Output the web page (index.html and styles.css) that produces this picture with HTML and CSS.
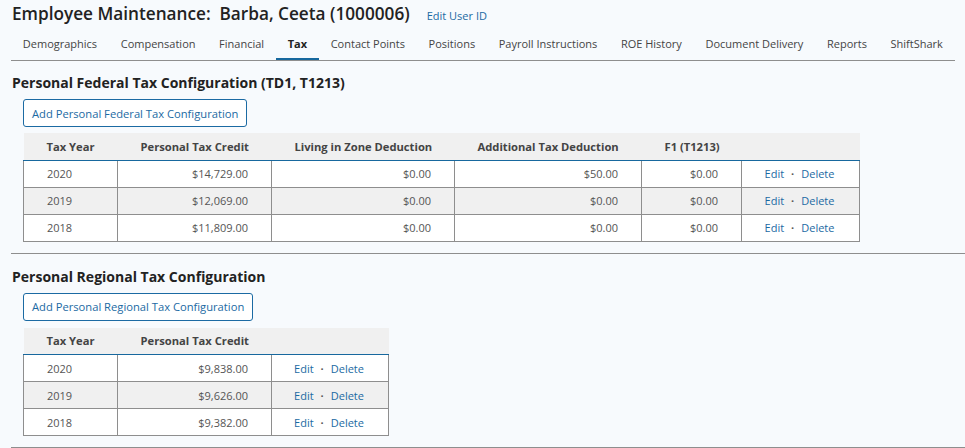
FILE: index.html
```html
<!DOCTYPE html>
<html>
<head>
<meta charset="utf-8">
<link rel="stylesheet" href="styles.css">
</head>
<body>
<div class="page">
  <header class="page-header">
    <h1 class="title">Employee Maintenance:&nbsp; Barba, Ceeta (1000006)</h1>
    <a class="link edit-id">Edit User ID</a>
  </header>
  <nav class="tabs">
    <a class="tab">Demographics</a>
    <a class="tab">Compensation</a>
    <a class="tab">Financial</a>
    <a class="tab active">Tax</a>
    <a class="tab">Contact Points</a>
    <a class="tab">Positions</a>
    <a class="tab">Payroll Instructions</a>
    <a class="tab">ROE History</a>
    <a class="tab">Document Delivery</a>
    <a class="tab">Reports</a>
    <a class="tab">ShiftShark</a>
  </nav>

  <section class="section">
    <h2 class="section-title">Personal Federal Tax Configuration (TD1, T1213)</h2>
    <button class="btn">Add Personal Federal Tax Configuration</button>
    <table class="grid federal">
      <colgroup>
        <col class="c-year"><col class="c-credit"><col class="c-zone"><col class="c-add"><col class="c-f1"><col class="c-act">
      </colgroup>
      <thead>
        <tr>
          <th class="left">Tax Year</th>
          <th>Personal Tax Credit</th>
          <th>Living in Zone Deduction</th>
          <th>Additional Tax Deduction</th>
          <th>F1 (T1213)</th>
          <th></th>
        </tr>
      </thead>
      <tbody>
        <tr><td class="left">2020</td><td>$14,729.00</td><td>$0.00</td><td>$50.00</td><td>$0.00</td><td class="actions"><a class="link">Edit</a><span class="dot">·</span><a class="link">Delete</a></td></tr>
        <tr class="alt"><td class="left">2019</td><td>$12,069.00</td><td>$0.00</td><td>$0.00</td><td>$0.00</td><td class="actions"><a class="link">Edit</a><span class="dot">·</span><a class="link">Delete</a></td></tr>
        <tr><td class="left">2018</td><td>$11,809.00</td><td>$0.00</td><td>$0.00</td><td>$0.00</td><td class="actions"><a class="link">Edit</a><span class="dot">·</span><a class="link">Delete</a></td></tr>
      </tbody>
    </table>
  </section>

  <section class="section">
    <h2 class="section-title">Personal Regional Tax Configuration</h2>
    <button class="btn">Add Personal Regional Tax Configuration</button>
    <table class="grid regional">
      <colgroup>
        <col class="c-year"><col class="c-rcredit"><col class="c-ract">
      </colgroup>
      <thead>
        <tr>
          <th class="left">Tax Year</th>
          <th>Personal Tax Credit</th>
          <th></th>
        </tr>
      </thead>
      <tbody>
        <tr><td class="left">2020</td><td>$9,838.00</td><td class="actions"><a class="link">Edit</a><span class="dot">·</span><a class="link">Delete</a></td></tr>
        <tr class="alt"><td class="left">2019</td><td>$9,626.00</td><td class="actions"><a class="link">Edit</a><span class="dot">·</span><a class="link">Delete</a></td></tr>
        <tr><td class="left">2018</td><td>$9,382.00</td><td class="actions"><a class="link">Edit</a><span class="dot">·</span><a class="link">Delete</a></td></tr>
      </tbody>
    </table>
  </section>
</div>
</body>
</html>
```

FILE: styles.css
```css
* { box-sizing: border-box; }
html, body {
  margin: 0;
  padding: 0;
  background: #f7fafd;
}
body {
  font-family: "Open Sans", "Liberation Sans", sans-serif;
  color: #333;
  font-size: 11px;
}
.page {
  padding-left: 11px;
}
.page-header {
  display: flex;
  align-items: baseline;
  gap: 17px;
  padding-top: 2px;
  padding-left: 1px;
  height: 29px;
  white-space: nowrap;
}
.title {
  margin: 0;
  font-size: 17.2px;
  line-height: 24px;
  font-weight: 600;
  color: #222;
}
.link {
  color: #1b6aa3;
  cursor: pointer;
}
.edit-id {
  font-size: 11px;
}
.tabs {
  display: flex;
  border-bottom: 1px solid #8e8e8e;
  margin-right: 10px;
  height: 32px;
  white-space: nowrap;
}
.tab {
  padding: 6px 11.8px 0;
  line-height: 17px;
  color: #444;
  font-size: 11px;
  border-bottom: 2px solid transparent;
}
.tab.active {
  color: #222;
  font-weight: 700;
  border-bottom-color: #17689e;
}
.section {
  border-bottom: 1px solid #8e8e8e;
  padding-bottom: 11px;
}
.section-title {
  margin: 12px 0 6px;
  padding-left: 1px;
  font-size: 14px;
  line-height: 20px;
  font-weight: 700;
  color: #222;
  white-space: nowrap;
}
.section + .section .section-title {
  margin-top: 13px;
}
.btn {
  display: block;
  margin-left: 12px;
  height: 28px;
  padding: 0 8px;
  background: #fff;
  border: 1px solid #1b6aa3;
  border-radius: 3px;
  color: #1b6aa3;
  font-family: inherit;
  font-size: 11.2px;
  white-space: nowrap;
}
.grid {
  margin: 6px 0 0 12px;
  border-collapse: collapse;
  table-layout: fixed;
  font-size: 11px;
  white-space: nowrap;
}
.grid.federal { width: 836px; }
.grid.regional { width: 365px; margin-top: 7px; }
.c-year { width: 94px; }
.c-credit { width: 154px; }
.c-zone { width: 183px; }
.c-add { width: 187px; }
.c-f1 { width: 100px; }
.c-act { width: 118px; }
.c-rcredit { width: 154px; }
.c-ract { width: 117px; }
.grid th {
  background: #f0f0f0;
  height: 27px;
  padding: 0 23px 0 23px;
  text-align: right;
  font-size: 11.2px;
  font-weight: 700;
  color: #444;
  border-bottom: 1px solid #17689e;
}
.grid td {
  height: 27px;
  padding: 0 23px;
  text-align: right;
  color: #555;
  border: 1px solid #8e8e8e;
  background: #fff;
}
.grid tr.alt td { background: #f0f0f0; }
.grid .left { text-align: left; }
.grid td.actions {
  text-align: center;
  padding: 0 2px 0 0;
}
.dot {
  margin: 0 7px;
  color: #555;
  font-weight: 700;
}
```
